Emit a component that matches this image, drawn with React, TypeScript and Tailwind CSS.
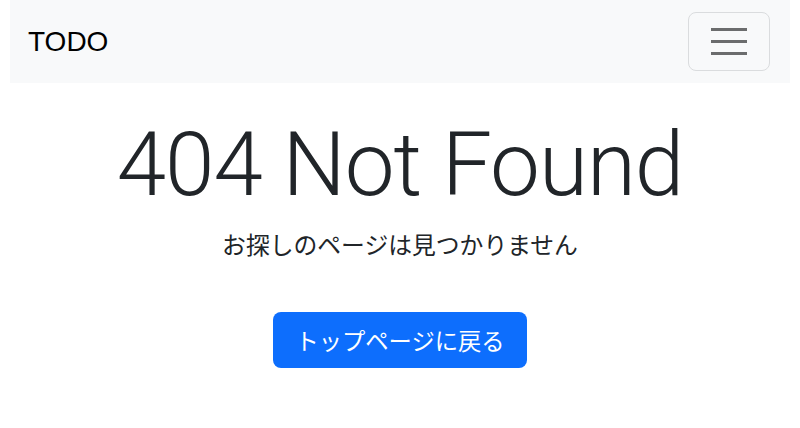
export default function App() {
  return (
    <div className="min-h-screen w-full bg-white px-[10px] text-[#212529]" style={{ fontFamily: '"Liberation Sans", "Noto Sans CJK JP", sans-serif' }}>
      {/* navbar */}
      <nav className="flex h-[83px] items-center justify-between bg-[#f8f9fa] pl-[18px] pr-[20px]">
        <a href="#" className="text-[28px] leading-none text-black">TODO</a>
        <button
          type="button"
          className="flex h-[59px] w-[82px] items-center justify-center rounded-[8px] border border-[#dadcde]"
        >
          <span className="flex w-[36px] flex-col gap-[9px]">
            <span className="h-[3px] bg-[#6b6c6d]" />
            <span className="h-[3px] bg-[#6b6c6d]" />
            <span className="h-[3px] bg-[#6b6c6d]" />
          </span>
        </button>
      </nav>

      <main className="flex flex-col items-center pt-[37px]">
        <h1 className="text-[89px] font-light leading-none tracking-[-1px]" style={{ fontFamily: 'Roboto, "Liberation Sans", sans-serif' }}>
          404 Not Found
        </h1>
        <p className="mt-[17px] text-[23.8px] leading-[36px]" style={{ fontFamily: '"Noto Sans CJK JP", sans-serif' }}>
          お探しのページは見つかりません
        </p>
        <a
          href="#"
          className="mt-[50px] flex h-[56px] w-[254px] items-center justify-center rounded-[8px] bg-[#0d6efd] text-[23.3px] text-white"
          style={{ fontFamily: '"Noto Sans CJK JP", sans-serif' }}
        >
          トップページに戻る
        </a>
      </main>
    </div>
  );
}
